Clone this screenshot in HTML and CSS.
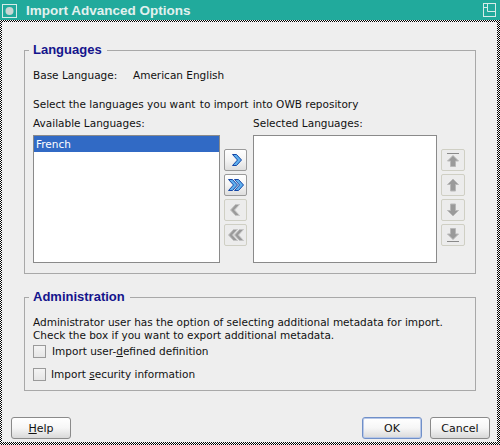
FILE: index.html
```html
<!DOCTYPE html>
<html>
<head>
<meta charset="utf-8">
<link rel="stylesheet" href="styles.css">
</head>
<body>
<div class="window">
  <div class="titlebar">
    <svg class="ticon" width="16" height="14" viewBox="0 0 16 14"><rect x="0.5" y="0.5" width="14" height="13" fill="none" stroke="#d6ece9"/><circle cx="7.5" cy="7" r="4" fill="#c8d6d4"/></svg>
    <span class="title">Import Advanced Options</span>
    <svg class="tmax" width="13" height="14" viewBox="0 0 13 14"><rect x="0.5" y="0.5" width="12" height="13" fill="none" stroke="#d6ece9"/><path d="M4.5 0.5 V8.5 H12.5 M0.5 4.5 H4.5" fill="none" stroke="#d6ece9"/></svg>
  </div>
  <div class="frame">
    <div class="content">
      <fieldset class="group group-lang">
        <legend>Languages</legend>
        <div class="baserow"><span class="blabel">Base Language:</span><span>American English</span></div>
        <div class="line select-line">Select the languages you want <span class="wide">to import</span> into OWB repository</div>
        <div class="shuttle">
          <div class="lbl">Available Languages:</div>
          <div></div>
          <div class="lbl">Selected Languages:</div>
          <div></div>
          <div class="list"><div class="item sel">French</div></div>
          <div class="btncol">
            <div class="ibtn"><svg width="16" height="16" viewBox="0 0 16 16"><path d="M4.5 2.5 H8.5 L13.5 8 L8.5 13.5 H4.5 L9.5 8 Z" fill="#5fb0ee" stroke="#1446a6"/></svg></div>
            <div class="ibtn"><svg width="18" height="16" viewBox="0 0 18 16"><path d="M1.5 2.5 H5.5 L10.5 8 L5.5 13.5 H1.5 L6.5 8 Z" fill="#5fb0ee" stroke="#1446a6"/><path d="M7.5 2.5 H11.5 L16.5 8 L11.5 13.5 H7.5 L12.5 8 Z" fill="#5fb0ee" stroke="#1446a6"/></svg></div>
            <div class="ibtn dis"><svg width="16" height="16" viewBox="0 0 16 16"><path d="M11.5 2.5 H7.5 L2.5 8 L7.5 13.5 H11.5 L6.5 8 Z" fill="#9a9a9a" stroke="#c4c4c4"/></svg></div>
            <div class="ibtn dis"><svg width="18" height="16" viewBox="0 0 18 16"><path d="M16.5 2.5 H12.5 L7.5 8 L12.5 13.5 H16.5 L11.5 8 Z" fill="#9a9a9a" stroke="#c4c4c4"/><path d="M10.5 2.5 H6.5 L1.5 8 L6.5 13.5 H10.5 L5.5 8 Z" fill="#9a9a9a" stroke="#c4c4c4"/></svg></div>
          </div>
          <div class="list"></div>
          <div class="btncol">
            <div class="ibtn dis"><svg width="16" height="16" viewBox="0 0 16 16"><path d="M2 1.5 H14" stroke="#8a8a8a"/><path d="M8 3.5 L13.5 9 H10.5 V14.5 H5.5 V9 H2.5 Z" fill="#9a9a9a" stroke="#b8b8b8"/></svg></div>
            <div class="ibtn dis"><svg width="16" height="16" viewBox="0 0 16 16"><path d="M8 2 L13.5 7.5 H10.5 V14 H5.5 V7.5 H2.5 Z" fill="#9a9a9a" stroke="#b8b8b8"/></svg></div>
            <div class="ibtn dis"><svg width="16" height="16" viewBox="0 0 16 16"><path d="M8 14 L13.5 8.5 H10.5 V2 H5.5 V8.5 H2.5 Z" fill="#9a9a9a" stroke="#b8b8b8"/></svg></div>
            <div class="ibtn dis"><svg width="16" height="16" viewBox="0 0 16 16"><path d="M8 12.5 L13.5 7 H10.5 V1.5 H5.5 V7 H2.5 Z" fill="#9a9a9a" stroke="#b8b8b8"/><path d="M2 14.5 H14" stroke="#8a8a8a"/></svg></div>
          </div>
        </div>
      </fieldset>
      <fieldset class="group group-admin">
        <legend>Administration</legend>
        <div class="line first">Administrator user has the option of selecting additional metadata for import.</div>
        <div class="line">Check the box if you want to export additional metadata.</div>
        <label class="check c1"><span class="box"></span><span>Import user-<u>d</u>efined definition</span></label>
        <label class="check c2"><span class="box"></span><span>Import <u>s</u>ecurity information</span></label>
      </fieldset>
      <div class="footer">
        <div class="btn"><span><u>H</u>elp</span></div>
        <div class="spacer"></div>
        <div class="btn default">OK</div>
        <div class="btn">Cancel</div>
      </div>
    </div>
  </div>
</div>
</body>
</html>
```

FILE: styles.css
```css
html, body {
  margin: 0;
  padding: 0;
}
body {
  width: 500px;
  height: 445px;
  overflow: hidden;
  font-family: "DejaVu Sans", sans-serif;
  font-size: 10.5px;
  color: #111;
}
.window {
  width: 500px;
  height: 445px;
  display: flex;
  flex-direction: column;
}
.titlebar {
  height: 20px;
  background: #21aa9c;
  display: flex;
  align-items: center;
  padding: 0 4px 0 2px;
}
.ticon { margin-top: 1px; }
.title {
  margin-left: 8px;
  font-family: "Liberation Sans", Arial, sans-serif;
  font-weight: bold;
  font-size: 13.5px;
  color: #e2f1ef;
  flex: 1;
}
.frame {
  flex: 1;
  display: flex;
  padding: 2px 3px 3px 2px;
  background: repeating-conic-gradient(#000 0 25%, #fff 0 50%) 0 0 / 2px 2px;
}
.content {
  flex: 1;
  background: #eeeeee;
  display: flex;
  flex-direction: column;
  padding: 20px 0 0 0;
}
.group {
  margin: 0 21px 0 22px;
  border: 1px solid #a8a8a8;
  padding: 0 8px 0 8px;
  min-width: 0;
}
.group legend {
  font-family: "Liberation Sans", Arial, sans-serif;
  font-weight: bold;
  font-size: 13px;
  line-height: 16px;
  color: #14148c;
  padding: 0 5px 0 4px;
  margin-left: -4px;
}
.baserow {
  margin-top: 10px;
  line-height: 14px;
  display: flex;
}
.blabel { width: 100px; }
.line { line-height: 13px; white-space: nowrap; }
.select-line { margin-top: 15px; line-height: 14px; }
.wide { margin: 0 1px; }
.shuttle {
  margin-top: 5px;
  display: grid;
  grid-template-columns: 187px 23px 186px 24px;
  column-gap: 4px;
  grid-template-rows: 14px 128px;
  row-gap: 5px;
  padding-bottom: 10px;
}
.shuttle > :nth-child(3), .shuttle > :nth-child(7) { margin-left: 2px; }
.lbl { line-height: 14px; white-space: nowrap; }
.list {
  background: #fff;
  border: 1px solid #8a8a8a;
  padding: 0;
}
.item {
  height: 16px;
  line-height: 16px;
  padding-left: 2px;
}
.item.sel {
  background: #316ac5;
  color: #fff;
}
.btncol {
  display: flex;
  flex-direction: column;
  gap: 3px;
  padding-top: 14px;
}
.ibtn {
  height: 20px;
  border: 1px solid #9a9a9a;
  border-radius: 2px;
  background: linear-gradient(#ffffff, #f4f4f4 50%, #dedede);
  display: flex;
  align-items: center;
  justify-content: center;
}
.ibtn.dis {
  border-color: #cfcfc4;
  background: #ececec;
}
.group-admin {
  margin-top: 15px;
  padding-bottom: 9px;
}
.group-admin .first { margin-top: 11px; }
.check {
  display: flex;
  align-items: center;
  height: 13px;
  line-height: 13px;
  white-space: nowrap;
}
.c1 { margin-top: 3px; }
.c2 { margin-top: 10px; }
.box {
  width: 11px;
  height: 11px;
  border: 1px solid #9a9a9a;
  background: linear-gradient(#f4f4f4, #e6e6e6);
  margin-right: 6px;
}
.c2 .box { margin-right: 5px; }
.footer {
  margin-top: auto;
  display: flex;
  gap: 8px;
  padding: 0 7px 3px 9px;
}
.spacer { flex: 1; }
.btn {
  width: 58px;
  height: 20px;
  border: 1px solid #8a8a8a;
  border-radius: 3px;
  background: linear-gradient(#ffffff, #f6f6f6 50%, #d9d9d9);
  display: flex;
  align-items: center;
  justify-content: center;
  font-size: 11px;
}
.btn.default {
  border-color: #6f8fc8;
  box-shadow: inset 0 0 0 1px #b8c8e8;
}
```
